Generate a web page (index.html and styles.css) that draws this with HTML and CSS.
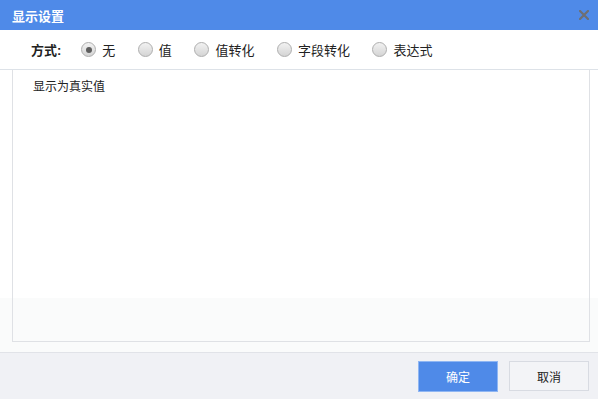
FILE: index.html
```html
<!DOCTYPE html>
<html lang="zh-CN">
<head>
  <meta charset="UTF-8" />
  <title>显示设置</title>
  <link rel="stylesheet" href="styles.css">
</head>
<body>
  <div class="dialog">
    <!-- Title bar -->
    <div class="dialog-header">
      <span class="dialog-title">显示设置</span>
      <svg class="close-icon" width="10" height="10" viewBox="0 0 10 10">
        <path d="M1 1 L9 9 M9 1 L1 9" stroke="#6f6f72" stroke-width="2.2" stroke-linecap="square" />
      </svg>
    </div>

    <!-- Mode selection -->
    <div class="mode-row">
      <span class="mode-label">方式:</span>
      <label class="radio-item"><span class="radio checked"></span>无</label>
      <label class="radio-item"><span class="radio"></span>值</label>
      <label class="radio-item"><span class="radio"></span>值转化</label>
      <label class="radio-item"><span class="radio"></span>字段转化</label>
      <label class="radio-item"><span class="radio"></span>表达式</label>
    </div>

    <!-- Content -->
    <div class="dialog-body">
      <div class="panel">
        <p class="panel-text">显示为真实值</p>
      </div>
    </div>

    <!-- Footer -->
    <div class="dialog-footer">
      <button class="btn btn-primary">确定</button>
      <button class="btn">取消</button>
    </div>
  </div>
</body>
</html>
```

FILE: styles.css
```css
body {
  margin: 0;
  padding: 0;
  font-family: "Liberation Sans", "Noto Sans CJK SC", sans-serif;
  background: #fff;
}

.dialog {
  width: 598px;
  height: 399px;
  display: flex;
  flex-direction: column;
}

.dialog-header {
  height: 30px;
  background-color: #4f8ae8;
  display: flex;
  align-items: center;
  justify-content: space-between;
  padding: 0 9px 0 12px;
}

.dialog-title {
  color: #fff;
  font-size: 13px;
  font-weight: bold;
}

.close-icon {
  display: block;
}

.mode-row {
  height: 39px;
  display: flex;
  align-items: center;
  padding-left: 31px;
  border-bottom: 1px solid #dde2e8;
  font-size: 13px;
  color: #222;
}

.mode-label {
  font-weight: bold;
  margin-right: 20px;
}

.radio-item {
  display: flex;
  align-items: center;
  margin-right: 22.5px;
}

.radio {
  width: 13px;
  height: 13px;
  border-radius: 50%;
  border: 1px solid #aeaeae;
  background: linear-gradient(#f2f2f2, #d4d4d4);
  margin-right: 6px;
  position: relative;
}

.radio.checked::after {
  content: "";
  position: absolute;
  left: 3.5px;
  top: 3.5px;
  width: 6px;
  height: 6px;
  border-radius: 50%;
  background: #5d5d5d;
}

.dialog-body {
  flex: 1;
  display: flex;
  padding: 0 8px 10px 12px;
  background: linear-gradient(#fff 0, #fff 228px, #fafbfb 228px);
}

.panel {
  flex: 1;
  border: 1px solid #dfe1e5;
  border-top: none;
}

.panel-text {
  margin: 7px 0 0 20px;
  font-size: 12px;
  color: #222;
}

.dialog-footer {
  height: 46px;
  border-top: 1px solid #e1e3e8;
  background-color: #f0f1f5;
  display: flex;
  align-items: center;
  justify-content: flex-end;
  padding-right: 9px;
  gap: 11px;
}

.btn {
  width: 80px;
  height: 30px;
  font-size: 12px;
  font-family: inherit;
  color: #222;
  background-color: #f3f4f7;
  border: 1px solid #d8dbe2;
  cursor: pointer;
}

.btn-primary {
  height: 31px;
  color: #fff;
  background-color: #4f8ae8;
  border: 1px solid #8fb6f3;
}
```
